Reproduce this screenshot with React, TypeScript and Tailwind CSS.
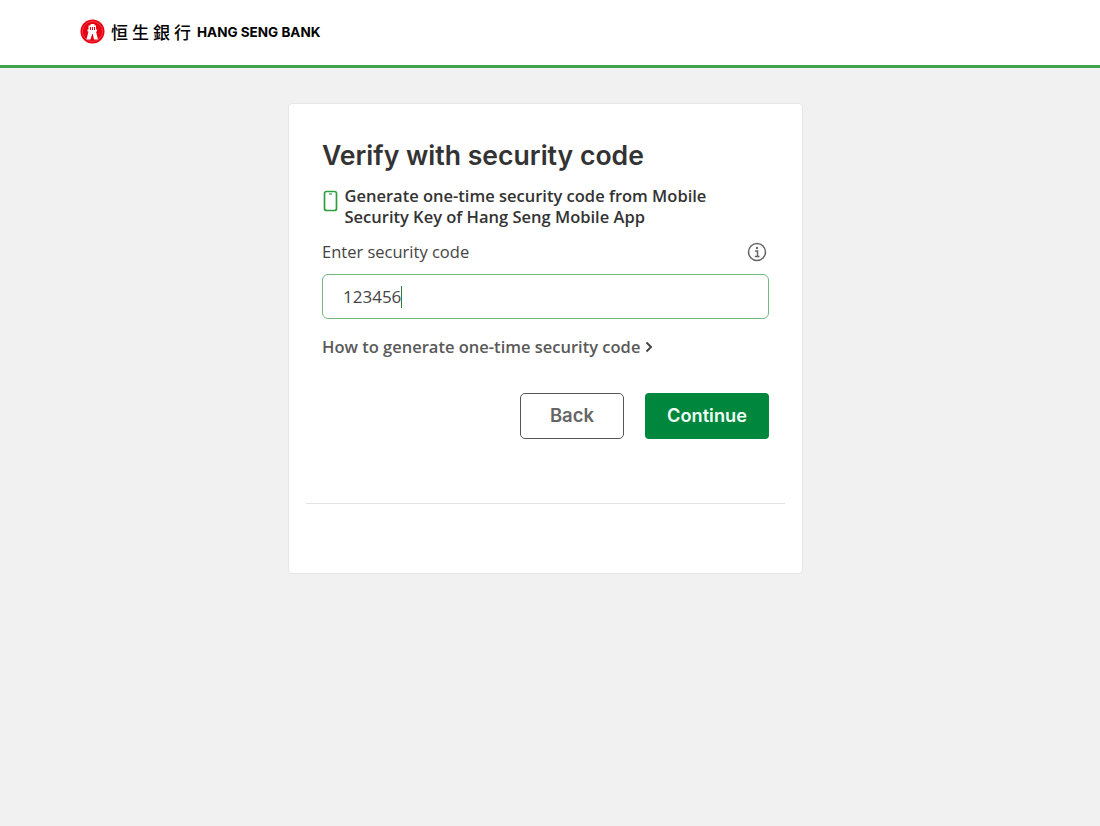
import React from 'react';

const Logo: React.FC = () => (
  <svg width="25" height="25" viewBox="0 0 25 25">
    <circle cx="12.500" cy="12.500" r="12" fill="#e60012" />
    <circle cx="12.500" cy="12.500" r="10" fill="none" stroke="#f4838a" strokeWidth="0.500" />
    <path
      d="M10.500 5h4v1.500h1.500v4h1v2h-1l2 8h-4l-1.200-5.500h-.6L10.500 20.500h-4l2-8h-1v-2h1v-4h2z"
      fill="#fff"
    />
    <path d="M10.500 8v3M12.500 8v3M14.500 8v3" stroke="#e60012" strokeWidth="1" />
  </svg>
);

const App: React.FC = () => {
  return (
    <div className="min-h-[826px] bg-[#f1f1f1] font-['Open_Sans',sans-serif]">
      {/* Header */}
      <div className="h-[68px] bg-white border-b-[3px] border-[#3fa34d] flex items-center pl-[80px] pb-[2px]">
        <Logo />
        <span className="ml-[6px] text-[17px] leading-none font-medium text-black tracking-[4px] font-['Noto_Sans_CJK_TC',sans-serif]">
          恒生銀行
        </span>
        <span className="ml-[2px] mt-[2px] text-[13.500px] leading-none font-bold text-black font-['Inter',sans-serif]">
          HANG SENG BANK
        </span>
      </div>

      {/* Card */}
      <div className="ml-[288px] mt-[35px] w-[515px] h-[471px] bg-white border border-[#e6e6e6] rounded-[4px] flex flex-col">
        <div className="px-[33px] pt-[32px]">
          <h1 className="text-[26.600px] leading-[38px] font-semibold text-[#333333] font-['Inter',sans-serif]">
            Verify with security code
          </h1>

          <div className="mt-[11px] flex items-start gap-[7px]">
            <svg width="15" height="22" viewBox="0 0 15 22" fill="none" className="shrink-0 mt-[5px] ml-[0.500px]">
              <rect x="1.500" y="1.500" width="12" height="19" rx="2" stroke="#2f9e44" strokeWidth="1.700" />
              <path d="M6 4h3" stroke="#2f9e44" strokeWidth="1.200" />
            </svg>
            <p className="text-[16.500px] leading-[21px] font-semibold text-[#333333]">
              Generate one-time security code from Mobile
              <br />
              Security Key of Hang Seng Mobile App
            </p>
          </div>

          <div className="mt-[12px] h-[26px] flex items-center justify-between">
            <span className="text-[16.500px] text-[#444444]">Enter security code</span>
            <svg width="20" height="20" viewBox="0 0 20 20" fill="none" className="mr-[2px]">
              <circle cx="10" cy="10" r="8.500" stroke="#666666" strokeWidth="1.500" />
              <circle cx="10" cy="6" r="1.200" fill="#666666" />
              <path d="M8 9h2.500v5M7.800 14.500h4.700" stroke="#666666" strokeWidth="1.500" />
            </svg>
          </div>

          <div className="mt-[9px] h-[45px] border-[1.500px] border-[#6fbb7d] rounded-[6px] flex items-center pl-[20px]">
            <span className="text-[17px] text-[#444444]">123456</span>
            <span className="w-px h-[22px] bg-[#2f7d3f]" />
          </div>

          <div className="mt-[16px] flex items-center gap-[5px]">
            <span className="text-[16.500px] leading-[24px] font-semibold text-[#595959]">
              How to generate one-time security code
            </span>
            <svg width="8" height="12" viewBox="0 0 8 12" fill="none">
              <path d="M1.500 1.500 6 6l-4.500 4.500" stroke="#444444" strokeWidth="2" />
            </svg>
          </div>

          <div className="mt-[34px] flex justify-end gap-[21px]">
            <button className="w-[104px] h-[46px] border border-[#555555] rounded-[5px] bg-white text-[18.500px] font-semibold text-[#666666] font-['Inter',sans-serif]">
              Back
            </button>
            <button className="w-[124px] h-[46px] rounded-[4px] bg-[#00873e] text-[18.200px] font-semibold text-[#f2fff6] font-['Inter',sans-serif]">
              Continue
            </button>
          </div>
        </div>

        <div className="mt-[64px] mx-[17px] border-t border-[#e3e3e3]" />
      </div>
    </div>
  );
};

export default App;
